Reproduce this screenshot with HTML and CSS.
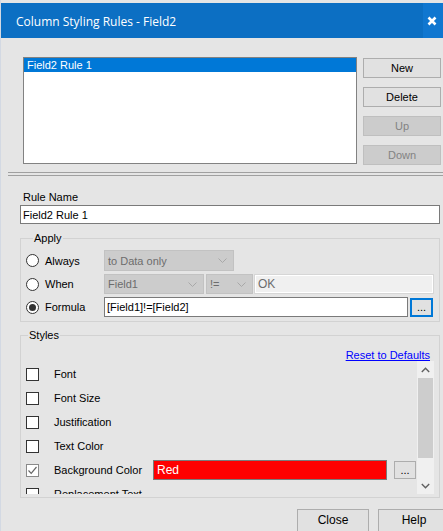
FILE: index.html
```html
<!DOCTYPE html>
<html>
<head>
<meta charset="utf-8">
<link rel="stylesheet" href="styles.css">
</head>
<body>
<div class="window">
  <div class="titlebar">
    <div class="title">Column Styling Rules - Field2</div>
    <div class="close">
      <svg width="10" height="10" viewBox="0 0 10 10"><path d="M1.5 1.5 L8.5 8.5 M8.5 1.5 L1.5 8.5" stroke="#fff" stroke-width="2.6" fill="none"/></svg>
    </div>
  </div>

  <div class="top">
    <div class="listbox">
      <div class="item sel">Field2 Rule 1</div>
    </div>
    <div class="btncol">
      <div class="btn">New</div>
      <div class="btn">Delete</div>
      <div class="btn disabled">Up</div>
      <div class="btn disabled">Down</div>
    </div>
  </div>

  <div class="sep"></div>

  <div class="form">
    <div class="label">Rule Name</div>
    <div class="input">Field2 Rule 1</div>

    <fieldset class="group apply">
      <legend>Apply</legend>
      <div class="arow r1">
        <div class="opt"><span class="radio"></span><span>Always</span></div>
        <div class="combo w130"><span>to Data only</span><svg class="chev" width="9" height="5" viewBox="0 0 9 5"><path d="M0.5 0.5 L4.5 4.5 L8.5 0.5" stroke="#a8a8a8" fill="none"/></svg></div>
      </div>
      <div class="arow r2">
        <div class="opt"><span class="radio"></span><span>When</span></div>
        <div class="combo w100"><span>Field1</span><svg class="chev" width="9" height="5" viewBox="0 0 9 5"><path d="M0.5 0.5 L4.5 4.5 L8.5 0.5" stroke="#a8a8a8" fill="none"/></svg></div>
        <div class="combo w47"><span>!=</span><svg class="chev" width="9" height="5" viewBox="0 0 9 5"><path d="M0.5 0.5 L4.5 4.5 L8.5 0.5" stroke="#a8a8a8" fill="none"/></svg></div>
        <div class="dinput">OK</div>
      </div>
      <div class="arow r3">
        <div class="opt"><span class="radio on"></span><span>Formula</span></div>
        <div class="input formula">[Field1]!=[Field2]</div>
        <div class="dots focus">...</div>
      </div>
    </fieldset>

    <fieldset class="group styles">
      <legend>Styles</legend>
      <div class="reset"><a>Reset to Defaults</a></div>
      <div class="scroller">
        <div class="rows">
          <div class="srow"><span class="cb"></span><span class="slabel">Font</span></div>
          <div class="srow"><span class="cb"></span><span class="slabel">Font Size</span></div>
          <div class="srow"><span class="cb"></span><span class="slabel">Justification</span></div>
          <div class="srow"><span class="cb"></span><span class="slabel">Text Color</span></div>
          <div class="srow"><span class="cb checked"><svg width="11" height="11" viewBox="0 0 11 11"><path d="M1.5 5.5 L4.2 8.3 L9.5 2" stroke="#666" stroke-width="1.2" fill="none"/></svg></span><span class="slabel">Background Color</span><div class="redbox">Red</div><div class="dots">...</div></div>
          <div class="srow"><span class="cb"></span><span class="slabel">Replacement Text</span></div>
        </div>
        <div class="vscroll">
          <div class="arrow"><svg width="9" height="6" viewBox="0 0 9 6"><path d="M0.8 5 L4.5 1.3 L8.2 5" stroke="#606060" stroke-width="1.4" fill="none"/></svg></div>
          <div class="track"><div class="thumb"></div></div>
          <div class="arrow"><svg width="9" height="6" viewBox="0 0 9 6"><path d="M0.8 1 L4.5 4.7 L8.2 1" stroke="#606060" stroke-width="1.4" fill="none"/></svg></div>
        </div>
      </div>
    </fieldset>
  </div>

  <div class="footer">
    <div class="btn big">Close</div>
    <div class="btn big">Help</div>
  </div>
</div>
</body>
</html>
```

FILE: styles.css
```css
* { box-sizing: border-box; }
html, body { margin: 0; padding: 0; }
body {
  background: #e5e5e5;
  font-family: "Liberation Sans", Arial, sans-serif;
  font-size: 11px;
  color: #000;
}
.window {
  width: 443px;
  height: 531px;
  overflow: hidden;
  background: #e5e5e5;
  padding-top: 3px;
  box-shadow: inset 1px 0 0 #d3d9e3;
}
.titlebar {
  height: 35px;
  display: flex;
  background: #0c6fc3;
  margin-left: 1px;
}
.title {
  flex: 1;
  color: #fff;
  font-family: "Open Sans", "Noto Sans", sans-serif;
  font-size: 12px;
  padding-left: 15px;
  padding-top: 2px;
  display: flex;
  align-items: center;
}
.close {
  width: 20px;
  background: #1077d0;
  display: flex;
  align-items: center;
  justify-content: center;
  padding-right: 2px;
}
.top {
  display: flex;
  padding-left: 23px;
  margin-top: 19px;
}
.listbox {
  width: 334px;
  height: 107px;
  background: #fff;
  border: 1px solid #828282;
}
.item {
  height: 14px;
  line-height: 14px;
  padding-left: 3px;
}
.item.sel { background: #0078d7; color: #fff; }
.btncol {
  margin-left: 6px;
  padding-top: 1px;
  display: flex;
  flex-direction: column;
  gap: 9px;
}
.btn {
  width: 78px;
  height: 20px;
  background: #e1e1e1;
  border: 1px solid #adadad;
  display: flex;
  align-items: center;
  justify-content: center;
  font-size: 11px;
}
.btn.disabled {
  background: #cccccc;
  border-color: #bfbfbf;
  color: #838383;
}
.sep {
  margin-top: 7px;
  margin-left: 8px;
  height: 4px;
  border-top: 1px solid #a0a0a0;
  border-bottom: 1px solid #a0a0a0;
}
.form {
  padding-left: 20px;
  width: 440px;
}
.label {
  margin-top: 15px;
  padding-left: 3px;
  line-height: 13px;
  height: 13px;
}
.input {
  margin-top: 1px;
  height: 19px;
  width: 420px;
  background: #fff;
  border: 1px solid #7a7a7a;
  padding-left: 2px;
  display: flex;
  align-items: center;
}
.group {
  margin: 0;
  padding: 0;
  min-width: 0;
  width: 420px;
  border: 1px solid #d2d2d2;
}
.group legend {
  margin-left: 7px;
  padding: 0 1px;
  line-height: 13px;
  height: 13px;
}
.apply {
  margin-top: 8px;
  padding: 5px 0 4px 5px;
}
.arow {
  display: flex;
  align-items: center;
}
.r1 { height: 21px; }
.r2 { height: 20px; margin-top: 3px; }
.r3 { height: 20px; margin-top: 3px; }
.opt {
  width: 78px;
  display: flex;
  align-items: center;
  gap: 6px;
}
.radio {
  width: 13px;
  height: 13px;
  border-radius: 50%;
  border: 1px solid #333;
  background: #fff;
  display: flex;
  align-items: center;
  justify-content: center;
}
.radio.on::after {
  content: "";
  width: 7px;
  height: 7px;
  border-radius: 50%;
  background: #333;
}
.combo {
  height: 100%;
  background: #cccccc;
  border: 1px solid #c2c2c2;
  color: #6d6d6d;
  display: flex;
  align-items: center;
  justify-content: space-between;
  padding: 0 6px 0 3px;
}
.w130 { width: 130px; }
.w100 { width: 100px; }
.w47 { width: 47px; margin-left: 2px; }
.dinput {
  margin-left: 1px;
  width: 180px;
  height: 20px;
  background: #f0f0f0;
  border: 1px solid #d6d6d6;
  box-shadow: inset 0 0 0 1px #fff;
  color: #6d6d6d;
  padding-left: 3px;
  display: flex;
  align-items: center;
  font-size: 12px;
}
.input.formula {
  margin-top: 0;
  width: 304px;
  height: 20px;
}
.dots {
  width: 23px;
  height: 19px;
  margin-left: 2px;
  background: #e1e1e1;
  border: 1px solid #adadad;
  display: flex;
  align-items: flex-end;
  justify-content: center;
  line-height: 12px;
  padding-bottom: 2px;
}
.dots.focus {
  border: 2px solid #0078d7;
}
.styles {
  margin-top: 7px;
  padding: 7px 5px 3px 0;
}
.reset {
  text-align: right;
  padding-right: 4px;
  height: 12px;
  line-height: 12px;
}
.reset a {
  color: #0000ff;
  text-decoration: underline;
}
.scroller {
  display: flex;
  height: 133px;
}
.rows {
  flex: 1;
  overflow: hidden;
  padding-left: 5px;
  padding-top: 1px;
}
.srow {
  height: 24px;
  display: flex;
  align-items: center;
  flex-shrink: 0;
}
.cb {
  width: 13px;
  height: 13px;
  border: 1px solid #333;
  background: #fff;
  display: flex;
  align-items: center;
  justify-content: center;
}
.cb.checked {
  border-color: #8a8a8a;
}
.slabel {
  margin-left: 15px;
  width: 99px;
  white-space: nowrap;
}
.redbox {
  width: 234px;
  height: 20px;
  background: #ff0000;
  border: 1px solid #7a7a7a;
  color: #fff;
  padding-left: 3px;
  display: flex;
  align-items: center;
  font-size: 12px;
}
.srow .dots {
  margin-left: 7px;
  width: 22px;
  height: 18px;
}
.vscroll {
  width: 17px;
  background: #f0f0f0;
  display: flex;
  flex-direction: column;
}
.arrow {
  height: 17px;
  display: flex;
  align-items: center;
  justify-content: center;
}
.track {
  flex: 1;
  padding: 0 1px;
}
.thumb {
  height: 80px;
  background: #cdcdcd;
}
.footer {
  display: flex;
  gap: 9px;
  padding-left: 297px;
  margin-top: 11px;
}
.btn.big {
  width: 72px;
  height: 24px;
  flex-shrink: 0;
  font-size: 12px;
  padding-bottom: 2px;
}
```
